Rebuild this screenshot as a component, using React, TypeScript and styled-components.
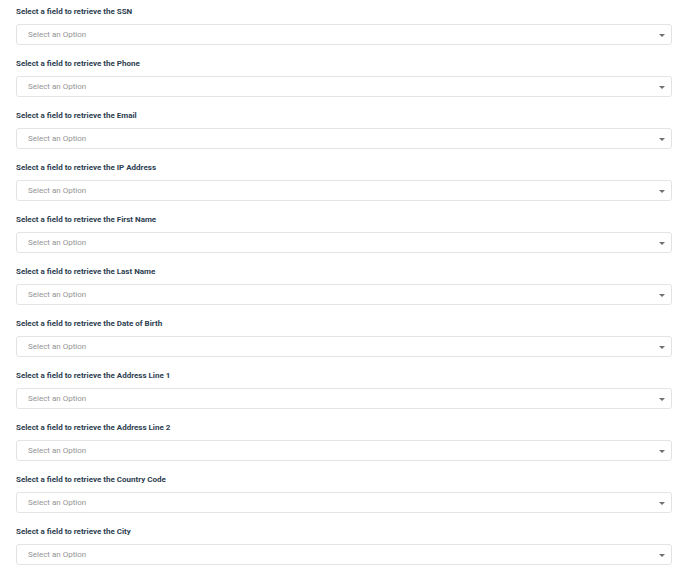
import React from 'react'
import styled, { createGlobalStyle } from 'styled-components'

const GlobalStyle = createGlobalStyle`
  body {
    margin: 0;
    background: #fff;
    font-family: Roboto, "Liberation Sans", sans-serif;
  }
`

const fields = [
  'SSN',
  'Phone',
  'Email',
  'IP Address',
  'First Name',
  'Last Name',
  'Date of Birth',
  'Address Line 1',
  'Address Line 2',
  'Country Code',
  'City',
]

const Form = styled.div`
  display: flex;
  flex-direction: column;
  padding: 5px 16px 0 16px;
`

const Field = styled.div`
  display: flex;
  flex-direction: column;
  height: 52px;
`

const Label = styled.label`
  font-size: 8px;
  font-weight: 700;
  color: #2d3e50;
  line-height: 14px;
  margin-bottom: 5px;
`

const SelectBox = styled.div`
  display: flex;
  align-items: center;
  justify-content: space-between;
  height: 19px;
  border: 1px solid #e3e3e3;
  border-radius: 3px;
  padding: 0 6px 0 11px;
  background: #fff;
`

const Placeholder = styled.span`
  font-size: 8px;
  color: #949494;
`

const Caret = styled.span`
  width: 0;
  height: 0;
  margin-top: 2px;
  border-left: 3px solid transparent;
  border-right: 3px solid transparent;
  border-top: 3px solid #6f6f6f;
`

const App = () => {
  return (
    <>
      <GlobalStyle />
      <Form>
        {fields.map((f) => (
          <Field key={f}>
            <Label>Select a field to retrieve the {f}</Label>
            <SelectBox>
              <Placeholder>Select an Option</Placeholder>
              <Caret />
            </SelectBox>
          </Field>
        ))}
      </Form>
    </>
  )
}

export default App
